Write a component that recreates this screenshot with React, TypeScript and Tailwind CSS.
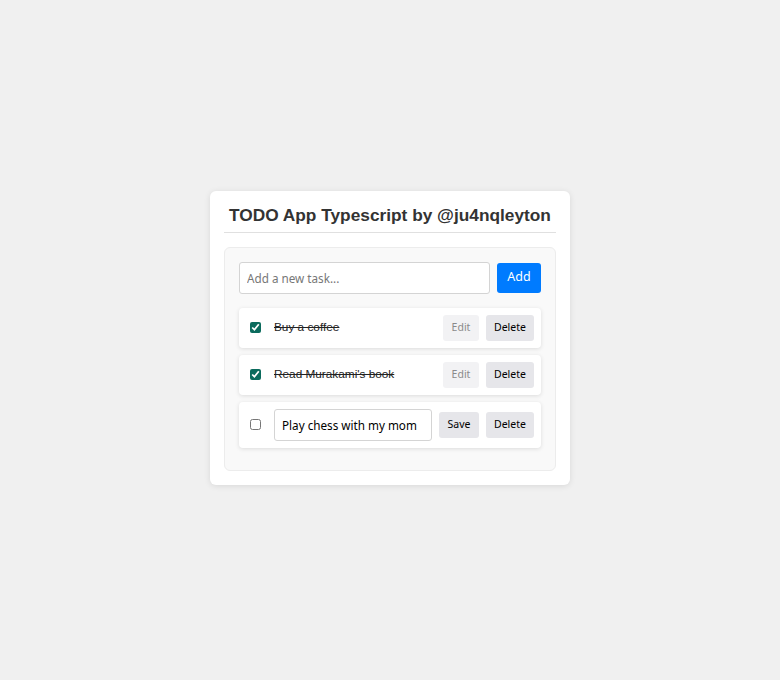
import React, { useState } from 'react';

interface Task {
  id: number;
  text: string;
  done: boolean;
  editing: boolean;
}

const initialTasks: Task[] = [
  { id: 1, text: 'Buy a coffee', done: true, editing: false },
  { id: 2, text: "Read Murakami's book", done: true, editing: false },
  { id: 3, text: 'Play chess with my mom', done: false, editing: true },
];

const uiFont = { fontFamily: '"Noto Sans", "Open Sans", sans-serif' };
const arial = { fontFamily: '"Liberation Sans", Arial, sans-serif' };

function TaskRow({ task }: { task: Task }) {
  return (
    <div className="flex items-center gap-[7px] rounded-[4px] bg-white pl-[11px] pr-[7px] py-[7px] shadow-[0_1px_4px_rgba(0,0,0,0.12)]">
      <input
        type="checkbox"
        readOnly
        checked={task.done}
        className="m-0 mr-[6px] h-[11px] w-[11px] shrink-0 accent-[#0b6b5d]"
      />
      {task.editing ? (
        <input
          readOnly
          value={task.text}
          style={uiFont}
          className="h-[32px] w-[158px] shrink-0 rounded-[3px] border border-[#d4d4d4] px-[7px] text-[11.7px] text-black outline-none"
        />
      ) : (
        <span style={arial} className="flex-1 text-[11.8px] text-[#222] line-through">
          {task.text}
        </span>
      )}
      <button
        style={uiFont}
        className={`h-[26px] shrink-0 rounded-[3px] text-[10.5px] ${
          task.editing ? 'w-[40px] bg-[#e6e6ea] text-black' : 'w-[36px] bg-[#f2f2f4] text-[#8a8a8a]'
        }`}
      >
        {task.editing ? 'Save' : 'Edit'}
      </button>
      <button
        style={uiFont}
        className="h-[26px] w-[48px] shrink-0 rounded-[3px] bg-[#e6e6ea] text-[10.5px] text-black"
      >
        Delete
      </button>
    </div>
  );
}

export default function App() {
  const [tasks] = useState<Task[]>(initialTasks);

  return (
    <div className="flex min-h-screen items-center justify-center bg-[#f0f0f0] pb-[5px]">
      <div className="w-[360px] rounded-[6px] bg-white p-[14px] shadow-[0_1px_6px_rgba(0,0,0,0.1)]">
        <h1
          style={arial}
          className="mb-[14px] border-b border-[#e0e0e0] pb-[7px] text-center text-[17.3px] leading-[20px] font-bold text-[#333]"
        >
          TODO App Typescript by @ju4nqleyton
        </h1>
        <div className="rounded-[6px] border border-[#ececec] bg-[#f9f9f9] px-[14px] pt-[14px] pb-[22px]">
          <div className="mb-[14px] flex items-center gap-[7px]">
            <input
              placeholder="Add a new task..."
              style={uiFont}
              className="h-[32px] flex-1 rounded-[3px] border border-[#d4d4d4] bg-white px-[7px] text-[11.7px] outline-none placeholder:text-[#777]"
            />
            <button
              style={uiFont}
              className="h-[30px] w-[44px] rounded-[3px] bg-[#007bff] text-[12.5px] text-white"
            >
              Add
            </button>
          </div>
          <div className="flex flex-col gap-[7px]">
            {tasks.map((task) => (
              <TaskRow key={task.id} task={task} />
            ))}
          </div>
        </div>
      </div>
    </div>
  );
}
